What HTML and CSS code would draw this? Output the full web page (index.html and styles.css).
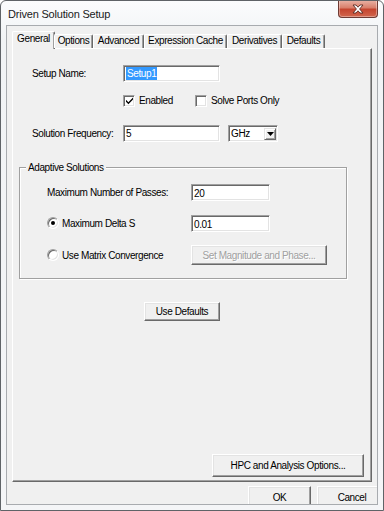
FILE: index.html
```html
<!DOCTYPE html>
<html>
<head>
<meta charset="utf-8">
<link rel="stylesheet" href="styles.css">
</head>
<body>
<div class="window">
  <div class="titlebar">
    <span class="title">Driven Solution Setup</span>
    <div class="close">
      <svg width="14" height="10" viewBox="0 0 14 10"><path d="M2 1 L5 1 L7 3.2 L9 1 L12 1 L8.6 5 L12 9 L9 9 L7 6.8 L5 9 L2 9 L5.4 5 Z" fill="#fff" stroke="#5a2a22" stroke-width="0.9" stroke-linejoin="round"/></svg>
    </div>
  </div>
  <div class="client">
    <div class="tabctl">
      <div class="tabs">
        <div class="tab sel">General</div>
        <div class="tab w-opt">Options</div>
        <div class="tab w-adv">Advanced</div>
        <div class="tab w-exp">Expression Cache</div>
        <div class="tab w-der">Derivatives</div>
        <div class="tab w-def">Defaults</div>
      </div>
      <div class="page">
        <div class="row r-name">
          <span class="lbl w91">Setup Name:</span>
          <div class="edit w97"><span class="hl">Setup1</span></div>
        </div>
        <div class="row r-checks">
          <div class="chk-item w72"><span class="chk"><svg width="9" height="9" viewBox="0 0 9 9"><path d="M1 3.8 L3.4 6.2 L8 1.6 L8 3.6 L3.4 8.2 L1 5.8 Z" fill="#000"/></svg></span><span>Enabled</span></div>
          <div class="chk-item"><span class="chk"></span><span>Solve Ports Only</span></div>
        </div>
        <div class="row r-freq">
          <span class="lbl w91">Solution Frequency:</span>
          <div class="edit w97">5</div>
          <div class="combo">
            <span>GHz</span>
            <span class="drop"><svg width="7" height="4" viewBox="0 0 7 4"><path d="M0 0 H7 L3.5 4 Z" fill="#000"/></svg></span>
          </div>
        </div>
        <div class="group">
          <span class="legend">Adaptive Solutions</span>
          <div class="grow g-pass">
            <span class="lbl w144">Maximum Number of Passes:</span>
            <div class="edit w79 h18">20</div>
          </div>
          <div class="grow g-delta">
            <span class="radio on"><span class="dot"></span></span>
            <span class="lbl w129">Maximum Delta S</span>
            <div class="edit w79 h18">0.01</div>
          </div>
          <div class="grow g-mat">
            <span class="radio"></span>
            <span class="lbl w129">Use Matrix Convergence</span>
            <div class="btn disabled w136 h20">Set Magnitude and Phase...</div>
          </div>
        </div>
        <div class="btn defaults">Use Defaults</div>
        <div class="btn hpc">HPC and Analysis Options...</div>
      </div>
    </div>
    <div class="bottom">
      <div class="btn ok">OK</div>
      <div class="btn cancel">Cancel</div>
    </div>
  </div>
</div>
</body>
</html>
```

FILE: styles.css
```css
* { box-sizing: border-box; }
html, body { margin: 0; padding: 0; background: #ffffff; }
body {
  font-family: "Liberation Sans", Arial, sans-serif;
  font-size: 10px;
  letter-spacing: -0.4px;
  color: #000;
}
.window {
  width: 384px;
  height: 511px;
  border: 1px solid #5f6367;
  border-radius: 6px 6px 0 0;
  background: linear-gradient(#fbfcfd, #f1f3f5 40px, #f4f5f7);
  display: flex;
  flex-direction: column;
  overflow: hidden;
}
.titlebar {
  height: 24px;
  flex: none;
  display: flex;
  align-items: flex-start;
  justify-content: space-between;
}
.title {
  font-size: 11px;
  letter-spacing: -0.2px;
  margin: 6px 0 0 7px;
  line-height: 14px;
  color: #1a1a1a;
}
.close {
  width: 40px;
  height: 18px;
  margin: -1px 5px 0 0;
  border: 1px solid #6e3a33;
  border-top: none;
  border-radius: 0 0 4px 4px;
  background: linear-gradient(#eab5a8, #d9806c 45%, #c5452f 55%, #d1664d);
  box-shadow: inset 0 0 0 1px rgba(255,255,255,0.35);
  display: flex;
  align-items: center;
  justify-content: center;
}
.client {
  margin-left: 5px;
  width: 372px;
  height: 480px;
  border: 1px solid #a8abaf;
  background: #f0f0f0;
  overflow: hidden;
  display: flex;
  flex-direction: column;
}
.tabctl {
  margin: 5px 0 0 5px;
  width: 360px;
  display: flex;
  flex-direction: column;
}
.tabs {
  height: 17px;
  display: flex;
  align-items: flex-end;
  padding-left: 2px;
  position: relative;
  z-index: 1;
}
.tab {
  height: 14px;
  line-height: 12px;
  text-align: center;
  white-space: nowrap;
  border-left: 1px solid #fff;
  border-top: 1px solid #fff;
  border-right: 1px solid #696969;
  box-shadow: inset -1px 0 0 #a0a0a0;
  border-radius: 2px 2px 0 0;
  background: #f0f0f0;
}
.tab.sel {
  height: 18px;
  width: 43px;
  margin-bottom: -1px;
  margin-left: -2px;
  margin-right: -1px;
  line-height: 14px;
  padding-bottom: 2px;
}
.w-opt { width: 39px; }
.w-adv { width: 51px; }
.w-exp { width: 83px; }
.w-der { width: 55px; }
.w-def { width: 43px; }
.page {
  height: 434px;
  border-top: 1px solid #fff;
  border-left: 1px solid #fff;
  border-right: 1px solid #696969;
  border-bottom: 1px solid #696969;
  box-shadow: inset -1px -1px 0 #a0a0a0;
  display: flex;
  flex-direction: column;
  align-items: flex-start;
}
.row {
  display: flex;
  align-items: center;
  padding-left: 19px;
}
.r-name { margin-top: 16px; height: 17px; }
.r-checks { margin-top: 12px; height: 13px; padding-left: 110px; }
.r-freq { margin-top: 18px; height: 17px; }
.lbl { white-space: nowrap; }
.w91 { width: 91px; flex: none; }
.w144 { width: 144px; flex: none; }
.w129 { width: 129px; flex: none; }
.w97 { width: 97px; }
.w79 { width: 79px; }
.w136 { width: 136px; }
.h18 { height: 18px; }
.h20 { height: 20px; }
.edit {
  height: 17px;
  background: #fff;
  border-top: 1px solid #a0a0a0;
  border-left: 1px solid #a0a0a0;
  border-right: 1px solid #fff;
  border-bottom: 1px solid #fff;
  box-shadow: inset 1px 1px 0 #696969, inset -1px -1px 0 #e3e3e3;
  padding: 2px 0 0 2px;
  line-height: 12px;
  flex: none;
}
.h18 { padding-top: 3px; }
.hl {
  background: #3399ff;
  color: #fff;
  display: inline-block;
  padding: 0 1px;
  line-height: 13px;
  margin-top: -1px;
}
.chk-item {
  display: flex;
  align-items: center;
  gap: 4px;
}
.w72 { width: 72px; }
.chk {
  width: 12px;
  height: 12px;
  background: #fff;
  border-top: 1px solid #a0a0a0;
  border-left: 1px solid #a0a0a0;
  border-right: 1px solid #fff;
  border-bottom: 1px solid #fff;
  box-shadow: inset 1px 1px 0 #696969, inset -1px -1px 0 #e3e3e3;
  display: flex;
  align-items: center;
  justify-content: center;
  flex: none;
}
.combo {
  margin-left: 8px;
  width: 50px;
  height: 17px;
  background: #fff;
  border-top: 1px solid #a0a0a0;
  border-left: 1px solid #a0a0a0;
  border-right: 1px solid #fff;
  border-bottom: 1px solid #fff;
  box-shadow: inset 1px 1px 0 #696969, inset -1px -1px 0 #e3e3e3;
  display: flex;
  align-items: stretch;
  justify-content: space-between;
  padding: 2px 1px 1px 2px;
  line-height: 12px;
}
.drop {
  width: 12px;
  background: #f0f0f0;
  border-top: 1px solid #e3e3e3;
  border-left: 1px solid #e3e3e3;
  border-right: 1px solid #696969;
  border-bottom: 1px solid #696969;
  box-shadow: inset 1px 1px 0 #fff, inset -1px -1px 0 #a0a0a0;
  display: flex;
  align-items: center;
  justify-content: center;
}
.group {
  position: relative;
  margin: 25px 0 0 6px;
  width: 328px;
  height: 112px;
  border: 1px solid #a0a0a0;
  box-shadow: inset 1px 1px 0 #fff, 1px 1px 0 #fff;
  display: flex;
  flex-direction: column;
}
.legend {
  position: absolute;
  left: 6px;
  top: -7px;
  background: #f0f0f0;
  padding: 0 2px;
  line-height: 13px;
}
.grow {
  display: flex;
  align-items: center;
  padding-left: 27px;
}
.g-pass { margin-top: 15px; height: 18px; }
.g-delta { margin-top: 13px; height: 18px; padding-left: 27px; }
.g-mat { margin-top: 13px; height: 20px; padding-left: 27px; }
.radio {
  width: 12px;
  height: 12px;
  border-radius: 50%;
  background: #fff;
  border: 1px solid;
  border-color: #a0a0a0 #fff #fff #a0a0a0;
  box-shadow: inset 1px 1px 0 #696969, inset -1px -1px 0 #e3e3e3;
  margin-right: 3px;
  display: flex;
  align-items: center;
  justify-content: center;
  flex: none;
}
.dot {
  width: 4px;
  height: 4px;
  border-radius: 50%;
  background: #000;
}
.btn {
  background: #f0f0f0;
  border-top: 1px solid #fff;
  border-left: 1px solid #fff;
  border-right: 1px solid #696969;
  border-bottom: 1px solid #696969;
  box-shadow: inset -1px -1px 0 #a0a0a0, inset 1px 1px 0 #e3e3e3;
  display: flex;
  align-items: center;
  justify-content: center;
  white-space: nowrap;
  flex: none;
}
.btn.disabled {
  color: #a0a0a0;
  text-shadow: 1px 1px 0 #fff;
}
.defaults {
  margin: 23px 0 0 131px;
  width: 76px;
  height: 19px;
}
.hpc {
  margin: auto 7px 4px 0;
  align-self: flex-end;
  width: 152px;
  height: 23px;
}
.bottom {
  display: flex;
  padding: 4px 0 0 241px;
  gap: 6px;
}
.ok { width: 63px; height: 23px; }
.cancel { width: 70px; height: 23px; }
```
